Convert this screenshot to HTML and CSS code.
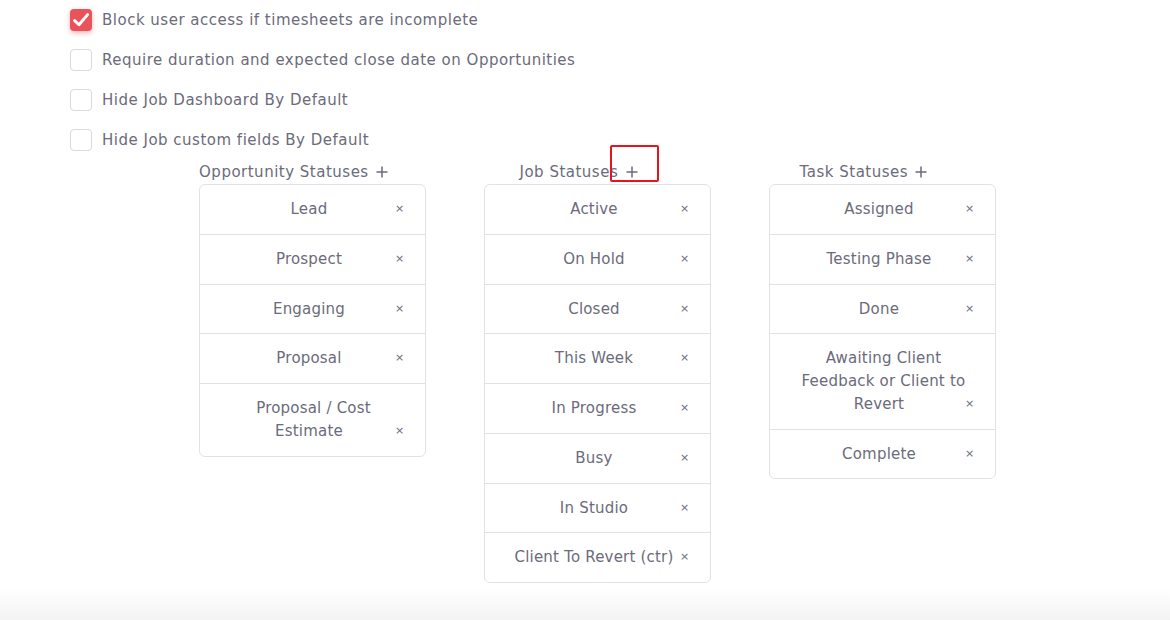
FILE: index.html
```html
<!DOCTYPE html>
<html>
<head>
<meta charset="utf-8">
<link rel="stylesheet" href="styles.css">
</head>
<body>
<div class="page">
  <div class="options">
    <label class="opt"><span class="cb checked"><svg viewBox="0 0 22 22" width="22" height="22"><path d="M4.6 11.6 L9 15.8 L17.6 5.6" fill="none" stroke="#fff" stroke-width="2.9" stroke-linecap="round" stroke-linejoin="round"/></svg></span><span class="opt-text">Block user access if timesheets are incomplete</span></label>
    <label class="opt"><span class="cb"></span><span class="opt-text">Require duration and expected close date on Opportunities</span></label>
    <label class="opt"><span class="cb"></span><span class="opt-text">Hide Job Dashboard By Default</span></label>
    <label class="opt"><span class="cb"></span><span class="opt-text">Hide Job custom fields By Default</span></label>
  </div>

  <div class="columns">
    <div class="col">
      <div class="col-head">Opportunity Statuses <svg class="plus" viewBox="0 0 12 12" width="12" height="12"><path d="M6 0.5V11.5M0.5 6H11.5" stroke="#6b6b7b" stroke-width="1.5"/></svg></div>
      <ul class="list">
        <li>Lead<span class="x">×</span></li>
        <li>Prospect<span class="x">×</span></li>
        <li>Engaging<span class="x">×</span></li>
        <li>Proposal<span class="x">×</span></li>
        <li>Proposal / Cost Estimate<span class="x">×</span></li>
      </ul>
    </div>
    <div class="col">
      <div class="col-head">Job Statuses <svg class="plus" viewBox="0 0 12 12" width="12" height="12"><path d="M6 0.5V11.5M0.5 6H11.5" stroke="#6b6b7b" stroke-width="1.5"/></svg><span class="mark"></span></div>
      <ul class="list">
        <li>Active<span class="x">×</span></li>
        <li>On Hold<span class="x">×</span></li>
        <li>Closed<span class="x">×</span></li>
        <li>This Week<span class="x">×</span></li>
        <li>In Progress<span class="x">×</span></li>
        <li>Busy<span class="x">×</span></li>
        <li>In Studio<span class="x">×</span></li>
        <li>Client To Revert (ctr)<span class="x">×</span></li>
      </ul>
    </div>
    <div class="col">
      <div class="col-head">Task Statuses <svg class="plus" viewBox="0 0 12 12" width="12" height="12"><path d="M6 0.5V11.5M0.5 6H11.5" stroke="#6b6b7b" stroke-width="1.5"/></svg></div>
      <ul class="list">
        <li>Assigned<span class="x">×</span></li>
        <li>Testing Phase<span class="x">×</span></li>
        <li>Done<span class="x">×</span></li>
        <li>Awaiting Client Feedback or Client to Revert<span class="x">×</span></li>
        <li>Complete<span class="x">×</span></li>
      </ul>
    </div>
  </div>
</div>
<div class="footer-fade"></div>
</body>
</html>
```

FILE: styles.css
```css
html, body {
  margin: 0;
  padding: 0;
  background: #ffffff;
}
body {
  font-family: "DejaVu Sans", "Open Sans", sans-serif;
  color: #6b6b7b;
  font-size: 15px;
  letter-spacing: 0.5px;
  height: 620px;
  overflow: hidden;
  position: relative;
}
.page {
  padding: 9px 0 0 70px;
}
.options {
  display: flex;
  flex-direction: column;
  gap: 18px;
}
.opt {
  display: flex;
  align-items: center;
  gap: 10px;
  height: 22px;
}
.cb {
  width: 20px;
  height: 20px;
  border: 1px solid #d9d9de;
  border-radius: 4px;
  background: #fff;
  flex: none;
  display: flex;
}
.cb.checked {
  background: #e9545a;
  box-shadow: 0 2px 5px rgba(233, 84, 90, 0.45);
  width: 22px;
  height: 22px;
  border: 0;
}
.opt-text {
  line-height: 22px;
}
.columns {
  display: flex;
  gap: 58px;
  margin-top: 9px;
  padding-left: 129px;
}
.col {
  width: 227px;
}
.col-head {
  position: relative;
  text-align: center;
  padding-right: 38px;
  height: 24px;
  line-height: 24px;
  white-space: nowrap;
}
.plus {
  vertical-align: -1px;
  margin-left: 2px;
}
.mark {
  position: absolute;
  left: 126px;
  top: -15px;
  width: 45px;
  height: 33px;
  border: 2px solid #e8141b;
  border-radius: 2px;
}
.list {
  list-style: none;
  margin: 0;
  padding: 0;
  border: 1px solid #e2e2e6;
  border-radius: 6px;
}
.list li {
  text-align: center;
  padding: 13px 21px 13px 23px;
  line-height: 22.75px;
  letter-spacing: 0.2px;
  border-top: 1px solid #e2e2e6;
}
.list li:first-child {
  border-top: 0;
}
.x {
  float: right;
  font-size: 11px;
  width: 9px;
  text-align: right;
  letter-spacing: 0;
}
.footer-fade {
  position: absolute;
  left: 0;
  right: 0;
  bottom: 0;
  height: 32px;
  background: linear-gradient(#ffffff, #f3f3f4);
}
```
